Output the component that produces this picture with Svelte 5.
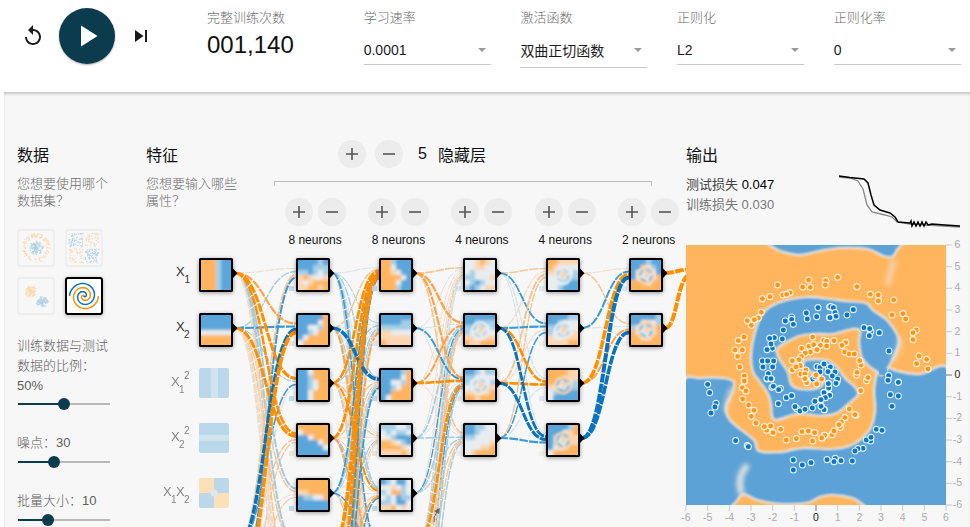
<script>
  const ORANGE = '#ff9100', BLUE = '#0877bd';
  const tones = {
    O: '#ff8f00', P: '#ffa347', o: '#f6c595', l: '#efdcc8',
    B: '#0a73bf', C: '#3a9bd2', b: '#9fcbe3', k: '#d3e1e8'
  };
  const heat = { O: '#ffb560', o: '#fbd6b0', w: '#e8edf0', b: '#a3cfe7', B: '#5aa5d9' };

  let seed = 7;
  function rnd() {
    seed = (seed * 16807) % 2147483647;
    return seed / 2147483647;
  }

  const fields = [
    { label: '学习速率', value: '0.0001' },
    { label: '激活函数', value: '双曲正切函数', tall: true },
    { label: '正则化', value: 'L2' },
    { label: '正则化率', value: '0' }
  ];
  const layers = [8, 8, 4, 4, 2];
  const sliders = [
    { text: ['训练数据与测试', '数据的比例：'], value: '50%', at: 50 },
    { text: [], lead: '噪点：', value: '30', at: 39 },
    { text: [], lead: '批量大小：', value: '10', at: 32.5 }
  ];

  // network links: "tone + width" per source row, one entry per destination row
  const colX = [199, 296, 379, 463, 546, 629];
  const rowY = (r) => 273 + 55 * r;
  const nets = [
    { rows: [0, 1, 5, 6], w: [
      ['l1', 'P2.2', 'O3', 'O2.6', 'b2', 'b2', 'o1.6', 'l2'],
      ['b1.4', 'C2.2', 'b1.2', 'O3', 'o1.4', 'o1.6', 'l2', 'l2'],
      ['o2', 'B3.4', 'C1.6', 'o1.4', 'l1', 'b1', 'o1', 'l1'],
      ['C2', 'O3.8', 'k1', 'o1.2', 'o1.2', 'b1', 'l1', 'o1']] },
    { rows: [0, 1, 2, 3, 4, 5, 6, 7], w: [
      ['k1', 'b1', 'b1.3', 'k1', 'b1.6', 'C1.6', 'o1', 'b1'],
      ['o1.4', 'k1', 'B3.6', 'l1', 'b1.3', 'o1.3', 'P1.6', 'b1'],
      ['O2.6', 'b1.3', 'k1', 'o1.4', 'O2', 'l1', 'o1.4', 'b1'],
      ['O2.8', 'l1', 'o1.4', 'l1.2', 'o1', 'b1.2', 'P1.8', 'b1'],
      ['C1.8', 'b1.4', 'b1', 'l1', 'k1', 'C1.4', 'o1.2', 'b1'],
      ['O3.6', 'b1', 'o1.5', 'b1.2', 'o1.2', 'k1', 'l1', 'o1'],
      ['O3.4', 'o1.4', 'b1.5', 'o1.2', 'P1.8', 'b1', 'l1', 'b1'],
      ['C2.4', 'P1.8', 'C1.8', 'l1.2', 'C1.5', 'b1.2', 'l1', 'o1']] },
    { rows: [0, 1, 2, 3, 4, 5, 6, 7], w: [
      ['o1.6', 'P2.4', 'P2.2', 'o1.6'],
      ['k1', 'k1', 'C2', 'l1'],
      ['l1', 'P2', 'O2.6', 'l1'],
      ['l1', 'b1.6', 'k1', 'b1.4'],
      ['l1.2', 'C1.3', 'b1.4', 'b1.2'],
      ['o1.2', 'b1.8', 'O2.8', 'o1.4'],
      ['k1.2', 'o1.8', 'C1.4', 'o1.4'],
      ['k1.4', 'o1.6', 'b1.8', 'b1.4']] },
    { rows: [0, 1, 2, 3], w: [
      ['o1.4', 'C1.8', 'k1.2', 'k1'],
      ['l1.2', 'C2.2', 'O2.6', 'B2.8'],
      ['o2', 'l1.3', 'O2.6', 'B3'],
      ['o1.5', 'C1.5', 'k1.2', 'C2.2']] },
    { rows: [0, 1, 2, 3], w: [
      ['l1', 'o1.5'],
      ['C2', 'k1'],
      ['O3.6', 'P2'],
      ['B4', 'B3.6']] }
  ];
  const links = [];
  nets.forEach((net, n) => net.w.forEach((ws, i) => ws.forEach((code, j) => {
    const x0 = colX[n] + 36, x1 = colX[n + 1], y0 = rowY(net.rows[i]);
    const y1 = rowY(j) + ((i - (net.w.length - 1) / 2) / net.w.length) * 12;
    const m = (x0 + x1) / 2;
    links.push({
      d: `M${x0} ${y0}C${m} ${y0} ${m} ${y1} ${x1} ${y1}`,
      c: tones[code[0]], w: +code.slice(1)
    });
  })));
  links.sort((a, b) => a.w - b.w);
  links.push({ d: 'M665 273C675 273 680 269 695 269', c: tones.O, w: 4 });
  links.push({ d: 'M665 328C678 328 676 274 692 274', c: tones.O, w: 4 });

  const grids = [
    [0, 0, 'OOObBB OOObBB OOObBB OOObBB OOObBB OOObBB'],
    [0, 1, 'BBBBBB BBBBBB BBBBBB wwwwww OOOOOO OOOOOO'],
    [1, 0, 'BBBBbB BBBbbb bbBbwb oOowwo owoOOO ooOOoO'],
    [1, 1, 'BBBBBO BBBBwO BBwwbO BBbwOO BwOOOO wOOOOO'],
    [1, 2, 'BBwOOO BBbOOO BBbwOO BBbwOO BBwOOO BBwOOO'],
    [1, 3, 'OOOOOO wOOOOO BBwOOO BBBBwO BBBBBw BBBBBB'],
    [1, 4, 'OOOOOO OOOOOO ooOOOO BbbwwO BBBBBB BBBBBB'],
    [2, 0, 'OObBBB OOwBBB OOowBB OOOOwB OOOwBB OOObBB'],
    [2, 1, 'BBBBBB BBBBbb bbbbbb oowwww oooooo Oooooo'],
    [2, 2, 'BBBBbO BBBBwO BBwwbO BBbwOO BBOOOO BwOOOO'],
    [2, 3, 'bbbwwb wbwbbw wwbBBB OOowbB OOOOow ooooOo'],
    [2, 4, 'BbwBBw wwowbw bwOObw wbwBbb bbwBBw ooOwow'],
    [3, 0, 'wwoOow wwooww wbwwww bbwwwo wbBbww bBbwoo'],
    [3, 1, 'BBBBBB BBbbbb bbwwwb bwwwww oowwoo OooOOO', 1],
    [3, 2, 'BBbwbb bbwwww bwwwwb wwwwoo oooooO OOoOOO', 1],
    [3, 3, 'BBbbww BBbwww bbwwww wwwwwo wwwooO woOOOO'],
    [4, 0, 'OOoooo Oowwww oowwwb wwwwbb wwwbBB wwbBBB', 1],
    [4, 1, 'BBBBbb BBbwww bbwwww bwwwwo owwooo ooooOO', 1],
    [4, 2, 'OOOOoo OOOooo OOwwwb owwwbb wbBBBB wBBBBB', 2],
    [4, 3, 'BBBBbO BBBwoO Bbwwoo Bbwwoo BwwoOO wOOOOO', 2],
    [5, 0, 'BBBbBB BBowbB BwwwwB BwwwwO OOOwOO OOOOOO', 2],
    [5, 1, 'BBBBBb BBwowb bwwwoO OwwwwO OOwwOO OOOOOO', 2]
  ];
  const nodes = grids.map(([c, r, g, ring]) => ({
    c, x: colX[c], y: 258 + 55 * r, ring,
    cells: g.split(' ').flatMap((line, i) => [...line].map((ch, j) => ({
      x: j * 5 - (j === 0 ? 6 : 0) + 2, y: i * 5 - (i === 0 ? 6 : 0) + 2,
      w: j === 0 || j === 5 ? 11.3 : 5.3, h: i === 0 || i === 5 ? 11.3 : 5.3, f: heat[ch]
    })))
  }));

  // closed smooth outline through a list of points
  function smooth(s) {
    const p = s.trim().split(/\s+/).map((q) => q.split(',').map(Number));
    const n = p.length;
    let d = `M${p[0]}`;
    for (let i = 0; i < n; i++) {
      const a = p[(i + n - 1) % n], b = p[i], c = p[(i + 1) % n], e = p[(i + 2) % n];
      d += `C${b[0] + (c[0] - a[0]) / 6} ${b[1] + (c[1] - a[1]) / 6} ${c[0] - (e[0] - b[0]) / 6} ${c[1] - (e[1] - b[1]) / 6} ${c[0]} ${c[1]}`;
    }
    return d + 'Z';
  }
  const regions = [
    '82,-2 88,3 97,7 114,10 134,6 154,3 181,4 197,11 206,12 211,5 213,-6 150,-12 90,-10',
    '-4,138 14,133 37,133 48,137 46,148 40,162 44,175 61,189 69,196 73,206 94,207 117,203 144,204 160,202 174,195 185,182 189,165 188,145 191,127 194,121 202,122 212,126 234,129 264,125 275,200 264,264 225,270 185,264 176,259 166,253 147,250 134,252 121,258 94,259 71,255 57,249 49,258 30,272 -8,266 -14,200',
    '67,127 65,110 69,87 77,68 94,57 121,52 144,54 160,56 180,58 187,65 201,75 211,89 213,98 208,112 202,123 196,130 191,127 184,122 176,113 173,97 174,86 167,84 147,89 130,89 114,91 101,97 91,104 93,113 102,127 105,139 114,144 132,143 138,134 128,128 118,123 120,115 141,115 151,122 159,133 169,142 172,150 161,160 151,168 134,171 118,169 107,170 91,175 86,171 85,160 82,149 74,137'
  ].map(smooth);

  const pts = (s, ox, oy) => s.split(' ').map((q) => {
    const [x, y] = q.split(',').map(Number);
    return [x / 3 + ox, y / 3 + oy];
  });
  const orangeDots = [
    ...pts('293,150 386,135 368,156 391,157 437,137 436,150 247,191 270,185 330,173 309,180 320,178 244,232 235,249 223,254 202,257 214,271 192,306 175,317 165,345 187,345 173,364 179,396 193,423 193,438 398,306 431,316 440,319 440,333 387,334 401,329 421,331 365,340 411,344 391,351 376,354 364,365 337,377 357,374 337,405 361,392 348,396 378,405 362,417 375,417 376,432 382,440 408,420 425,432 410,447', -6, -10),
    ...pts('53,127 111,155 151,178 175,180 175,198 221,195 216,240 249,236 257,252 289,285 279,293 279,314 297,363 320,373 290,386 324,402 42,317 77,323 66,331 74,351 88,357 103,357 123,390 119,377 110,420 111,412 140,437 144,428', 134, -10),
    ...pts('193,12 187,32 198,42 188,66 206,84 222,100 214,118 228,138 265,155 260,160 253,149 272,147 279,167 302,157 319,189 349,185 366,164 385,162 404,167 398,192 434,175 426,183 380,17 375,5', -6, 132),
    ...pts('122,41 88,96 108,115 105,113 75,122 64,135 61,151 57,143 36,173 42,162 14,175 5,183', 134, 132)
  ];
  const blueDots = [
    ...pts('414,218 449,216 410,245 382,252 379,234 335,246 335,253 316,258 340,268 310,285 307,312 283,308 269,310 277,340 273,327 261,344 247,378 263,378 281,378 249,396 278,396 265,416 261,432 274,432 83,448 448,248 431,387 411,395 420,398 445,397 420,411 445,411 398,432 405,425', -6, -10),
    ...pts('32,215 40,218 45,233 48,244 30,248 81,240 100,224 132,278 152,290 149,281 148,302 178,293 207,348 206,422 204,436 235,441 12,387 31,396 24,410 45,411 37,423 51,440 53,432 25,445', 134, -10),
    ...pts('89,47 108,79 105,90 93,108 167,191 202,206 205,209 261,4 273,5 276,31 280,28 301,34 296,38 319,62 335,56 295,80 350,95 345,89 360,102 375,97 397,93 405,73 422,68 425,89 433,98 432,47 447,54 445,35 340,249 340,279 367,264 393,257 441,248', -6, 132),
    ...pts('235,16 211,53 235,57 216,88 169,157 186,160 152,192 139,189 153,181 129,214 114,215 105,222 97,252 46,244 42,254 63,251 12,98 12,47 29,55 16,62 26,33 25,20 48,19 3,68 3,88', 134, 132)
  ];
  const ticks = Array.from({ length: 13 }, (_, i) => i - 6);

  // dataset previews, 34x34
  function cloud(kind) {
    const out = [];
    for (let i = 0; i < 260; i++) {
      let x, y, c;
      if (kind === 'circle') {
        const inner = i % 2, a = rnd() * 6.283, r = inner ? rnd() * 7 : 10.5 + rnd() * 4;
        x = 17 + r * Math.cos(a); y = 17 + r * Math.sin(a); c = inner;
      } else if (kind === 'xor') {
        x = 2 + rnd() * 30; y = 2 + rnd() * 30; c = (x < 17) === (y < 17);
        if (Math.abs(x - 17) < 0.8 || Math.abs(y - 17) < 0.8) continue;
      } else {
        c = i % 2;
        const r = rnd() * 6, a = rnd() * 6.283;
        x = (c ? 23 : 12) + r * Math.cos(a); y = (c ? 23 : 12.5) + r * Math.sin(a) * 0.9;
      }
      out.push({ x, y, c: c ? BLUE : ORANGE });
    }
    return out;
  }
  const clouds = ['circle', 'xor', 'gauss'].map(cloud);
  function spiral(off) {
    let d = '';
    for (let i = 0; i <= 90; i++) {
      const t = i / 90, a = t * 11 + off, r = t * 14.5;
      d += `${i ? 'L' : 'M'}${17 + r * Math.sin(a)} ${17 + r * Math.cos(a)}`;
    }
    return d;
  }
</script>

{#snippet round(sign)}
  <button class="round" aria-label={sign}>
    <svg width="14" height="14" viewBox="0 0 14 14">
      <path d={sign === 'plus' ? 'M1 7H13M7 1V13' : 'M1 7H13'} />
    </svg>
  </button>
{/snippet}

<div class="page">
  <header>
    <div class="controls">
      <svg class="reset" width="24" height="24" viewBox="0 0 24 24"><path d="M12 5V1L7 6l5 5V7c3.31 0 6 2.69 6 6s-2.69 6-6 6-6-2.69-6-6H4c0 4.42 3.58 8 8 8s8-3.58 8-8-3.58-8-8-8z" /></svg>
      <div class="play"><svg width="36" height="36" viewBox="0 0 24 24"><path d="M8 5v14l11-7z" /></svg></div>
      <svg class="step" width="24" height="24" viewBox="0 0 24 24"><path d="M6 18l8.5-6L6 6v12zM16 6v12h2V6h-2z" /></svg>
    </div>
    <div class="field epoch"><span class="label">完整训练次数</span><b>001,140</b></div>
    {#each fields as f}
      <div class="field">
        <span class="label">{f.label}</span>
        <div class="select" class:tall={f.tall}><span>{f.value}</span><i></i></div>
      </div>
    {/each}
  </header>

  <main>
    <svg class="network" width="686" height="434" viewBox="4 93 686 434">
      <defs>
        <filter id="soft" x="-20%" y="-20%" width="140%" height="140%"><feGaussianBlur stdDeviation="1.5" /></filter>
        <filter id="ringsoft"><feGaussianBlur stdDeviation="0.8" /></filter>
        <clipPath id="cell"><rect x="1" y="1" width="32" height="32" rx="2" /></clipPath>
      </defs>
      <g fill="none">
        {#each links as l}
          <path d={l.d} stroke={l.c} stroke-width={l.w} stroke-dasharray="9 1.2" />
        {/each}
      </g>
      <path d="M434 522q-1-5 3-10" fill="none" stroke="#666" /><path d="M440 508l-1 6-5-3z" fill="#666" />
      {#each nodes as n}
        {#if n.c > 0}
          <rect x={n.x - 7} y={n.y + 28} width="5" height="5" fill={n.y % 2 ? '#e6e2d8' : '#b9d6e6'} opacity={n.c > 2 ? 0.45 : 0.9} />
        {/if}
        <g transform="translate({n.x} {n.y})">
          <rect class="shade" width="34" height="34" rx="2" />
          <g clip-path="url(#cell)">
            <g filter="url(#soft)">
              {#each n.cells as k}<rect x={k.x} y={k.y} width={k.w} height={k.h} fill={k.f} />{/each}
            </g>
            {#if n.ring}
              <g fill="none" filter="url(#ringsoft)">
                <circle cx="17" cy="17.500" r="8" stroke={n.ring === 2 ? '#fbd3a8' : '#e8edf0'} stroke-width="2.5" />
                <circle cx="17" cy="17.500" r="5.6" stroke="#7dbbde" stroke-width="2.4" stroke-dasharray="6 2.500" opacity={n.ring === 2 ? 0.95 : 0.5} />
                <path d="M15 15.500q4-2 4 1q0 3-4 2" stroke="#f7d0a6" stroke-width="2.5" />
              </g>
            {/if}
          </g>
          <rect x="1" y="1" width="32" height="32" rx="1.5" fill="none" stroke="#000" stroke-width="2" />
          <path d="M34 10.5L38.5 15.2L34 20z" />
        </g>
      {/each}
      <g>
        <rect x="199" y="368" width="30" height="30" rx="2" fill="#bbd8ea" /><rect x="211" y="368" width="7" height="30" fill="#cfe4ee" />
        <rect x="199" y="423" width="30" height="30" rx="2" fill="#bbd8ea" /><rect x="199" y="435" width="30" height="6" fill="#cfe4ee" />
        <rect x="199" y="478" width="30" height="30" rx="2" fill="#fddfba" /><path d="M214 478h13a2 2 0 0 1 2 2v13h-15zM199 493h15v15h-13a2 2 0 0 1-2-2z" fill="#bbd8ea" />
        <circle cx="214" cy="493" r="3.5" fill="#dce9ee" />
      </g>
      <g class="names">
        <text x="176" y="276">X</text><text class="sub" x="184.500" y="283">1</text>
        <text x="176" y="331">X</text><text class="sub" x="184" y="338">2</text>
        <g opacity=".6">
          <text x="171" y="386">X</text><text class="sub" x="179" y="393">1</text><text class="sub" x="184" y="379">2</text>
          <text x="171" y="441">X</text><text class="sub" x="179" y="448">2</text><text class="sub" x="184" y="434">2</text>
          <text x="163" y="496">X</text><text class="sub" x="171" y="503">1</text><text x="176" y="496">X</text><text class="sub" x="184" y="503">2</text>
        </g>
      </g>
    </svg>

    <section class="data">
      <h4>数据</h4>
      <p>您想要使用哪个<br />数据集？</p>
      <div class="sets">
        {#each clouds as c}
          <svg class="set" width="34" height="34" viewBox="0 0 34 34">
            {#each c as p}<rect x={p.x - 0.5} y={p.y - 0.5} width="1.1" height="1.1" fill={p.c} />{/each}
          </svg>
        {/each}
        <svg class="set active" width="34" height="34" viewBox="0 0 34 34">
          <path d={spiral(-3.15)} stroke={ORANGE} /><path d={spiral(-6.29)} stroke={BLUE} />
        </svg>
      </div>
      {#each sliders as s}
        <div class="slider">
          <div class="caption">
            {#each s.text as t}<span>{t}</span>{/each}
            <span>{s.lead ?? ''}<em>{s.value}</em></span>
          </div>
          <div class="track"><div class="fill" style="width:{s.at}%"></div><div class="knob"></div></div>
        </div>
      {/each}
    </section>

    <section class="features">
      <h4>特征</h4>
      <p>您想要输入哪些<br />属性？</p>
    </section>

    <section class="hidden">
      <div class="layer-head">{@render round('plus')}{@render round('minus')}<span class="num">5</span><span>隐藏层</span></div>
      <div class="bracket"></div>
      <div class="layers">
        {#each layers as n}
          <div class="layer">
            <div class="pair">{@render round('plus')}{@render round('minus')}</div>
            <span>{n} neurons</span>
          </div>
        {/each}
      </div>
    </section>

    <section class="output">
      <h4>输出</h4>
      <div class="metrics">
        <div class="loss">
          <div>测试损失 <b>0.047</b></div>
          <div class="train">训练损失 0.030</div>
        </div>
        <svg width="122" height="60" viewBox="838 172 122 60" fill="none">
          <path d="M839 178L850 179 858 182 863 190 867 206 872 213 885 216 892 218 897 223 910 225 960 228" stroke="#888" stroke-width="1.3" />
          <path d="M839 177L850 178.500 864 180 868 184 871 196 874 206 880 211 890 214 895 218 898 223 910 224 911 222 912 227 914 223 916 227 918 223 920 227 922 223 924 227 926 223 928 226 932 225 945 226 960 227" stroke="#000" stroke-width="1.5" />
        </svg>
      </div>
      <svg class="plot" width="284" height="282" viewBox="0 0 284 282">
        <defs>
          <clipPath id="area"><rect width="260" height="260" /></clipPath>
          <filter id="edge"><feGaussianBlur stdDeviation="1.1" /></filter>
          <filter id="haze" x="-100%" y="-50%" width="300%" height="200%"><feGaussianBlur stdDeviation="2.5" /></filter>
        </defs>
        <g clip-path="url(#area)">
          <rect width="260" height="260" fill="#ffb55e" />
          <g filter="url(#edge)" fill="#5ba2d6" stroke="#e6e5df" stroke-width="2.2">
            {#each regions as d}<path {d} />{/each}
          </g>
          <path d="M194 124L200 129" stroke="#5ba2d6" stroke-width="9" filter="url(#edge)" />
          <g filter="url(#haze)" fill="none" stroke-linecap="round">
            <path d="M207 16Q205 28 202 38" stroke="#f4d6b5" stroke-width="5" />
            <path d="M60 222Q51 232 55 247" stroke="#e9e6df" stroke-width="6" />
            <path d="M46 143Q40 155 40 166" stroke="#e9e2d4" stroke-width="3" />
            <path d="M213 94Q216 102 207 114" stroke="#e9e2d4" stroke-width="3" />
          </g>
          <g stroke="#fff" stroke-opacity=".85" stroke-width="1.1">
            {#each blueDots as p}<circle cx={p[0]} cy={p[1]} r="3" fill="#0877c4" />{/each}
            {#each orangeDots as p}<circle cx={p[0]} cy={p[1]} r="3" fill="#ff9614" />{/each}
          </g>
        </g>
        {#each ticks as t}
          <g class="tick" class:zero={t === 0}>
            <path d="M{130 + t * 21.67} 260v6M260 {130 - t * 21.67}h6" />
            <text x={130 + t * 21.67} y="276">{t}</text>
            <text x="271.500" y={133 - t * 21.67}>{t}</text>
          </g>
        {/each}
      </svg>
    </section>
  </main>
</div>

<style>
  :global(body) { background: #fff; overflow: hidden; }
  .page {
    width: 970px; height: 527px; overflow: hidden; color: #111;
    font-family: "Liberation Sans", "Noto Sans CJK SC", sans-serif; font-size: 13px;
  }
  header { display: flex; height: 92px; }
  .controls { display: flex; flex: none; align-items: center; height: 56px; margin-top: 8px; width: 207px; box-sizing: border-box; padding-left: 21px; fill: #1b1b1b; }
  .play {
    display: flex; align-items: center; justify-content: center; width: 56px; height: 56px; margin: 0 14px;
    border-radius: 50%; background: #0b3c4d; fill: #fff; box-shadow: 0 1px 2px #0005;
  }
  .field { flex: none; width: 127px; margin-right: 29.7px; padding-top: 8px; }
  .label { display: block; height: 20px; line-height: 20px; color: #6c6c6c; font-weight: 300; }
  .epoch b { display: block; font-weight: 400; font-size: 24px; line-height: 32px; margin-top: 1px; }
  .select {
    display: flex; align-items: center; justify-content: space-between; box-sizing: border-box;
    height: 29px; margin-top: 8px; padding: 0 5px 1px 0; font-size: 14px; border-bottom: 1px solid #c8c8c8; color: #1c1c1c;
  }
  .select.tall { height: 32px; padding-bottom: 3px; }
  .select i { border: 4.5px solid transparent; border-top-color: #999; border-bottom: 0; }
  .select.tall i { margin-top: 0; }
  main {
    position: relative; display: grid; grid-template-columns: 129px 128px 412px 284px;
    height: 435px; margin-left: 4px; padding-left: 13px; background: #f7f7f7; box-shadow: inset 0 3px 3px -1px #0003;
  }
  .network { position: absolute; left: 0; top: 1px; }
  .shade { filter: drop-shadow(0 1px 2px #0006); }
  .names text { font-size: 13px; fill: #333; }
  .names .sub { font-size: 10px; }
  section { position: relative; padding-top: 53px; }
  h4 { margin: 0; font-size: 16px; font-weight: 400; line-height: 22px; color: #111; }
  p { margin: 8px 0 0; line-height: 17px; font-weight: 300; color: #6c6c6c; white-space: nowrap; }
  .sets { display: grid; grid-template-columns: 38px 38px; gap: 10px; margin-top: 20px; }
  .set { border: 2px solid #ddd; border-radius: 2px; opacity: .28; background: #f7f7f7; }
  .set.active { border-color: #000; opacity: 1; background: #fff; fill: none; stroke-width: 1.5; border-radius: 3px; box-shadow: 0 1px 4px #0004; }
  .slider { width: 92px; margin-left: 1px; padding-top: 15px; }
  .caption { display: flex; flex-direction: column; margin-left: -1px; line-height: 20px; color: #5e5e5e; font-weight: 300; white-space: nowrap; }
  .caption em { font-style: normal; }
  .track { display: flex; align-items: center; height: 12px; margin: 3px 0 8px; background: linear-gradient(#b9b9b9, #b9b9b9) 0 5px / 100% 2px no-repeat; }
  .sets + .slider { padding-top: 21px; }
  .sets + .slider .track { margin-top: 2px; }
  .fill { height: 2px; background: #0b3c4d; }
  .knob { width: 12px; height: 12px; border-radius: 50%; margin-left: -6px; background: #0b3c4d; }
  .round {
    display: flex; align-items: center; justify-content: center; width: 28px; height: 28px; padding: 0;
    border: 0; border-radius: 50%; background: #ececec;
  }
  .round path { stroke: #555; stroke-width: 1.6; fill: none; }
  .layer-head { display: flex; align-items: center; gap: 9px; height: 28px; margin: -5px 0 0 64px; font-size: 16px; }
  .num { margin: 0 2px 0 6px; }
  .bracket { width: 376px; height: 4px; margin-top: 13px; border: 1px solid #bbb; border-bottom: 0; }
  .layers { display: flex; margin: 12px 0 0 -0.6px; }
  .layer { display: flex; flex-direction: column; align-items: center; width: 83.4px; flex: none; }
  .pair { display: flex; gap: 5px; margin-bottom: 7px; }
  .layer span { font-size: 12px; line-height: 14px; }
  .metrics { display: flex; height: 60px; margin-top: 4px; }
  .loss { width: 152px; padding-top: 4px; line-height: 20px; color: #444; }
  .loss b { font-weight: 400; color: #000; }
  .train { color: #777; }
  .plot { position: relative; display: block; margin-top: 14px; overflow: visible; }
  .tick path { stroke: #ccc; }
  .tick text { font-size: 10.5px; fill: #aaa; text-anchor: middle; }
  .zero path { stroke: #777; }
  .tick.zero text { fill: #222; }
</style>
